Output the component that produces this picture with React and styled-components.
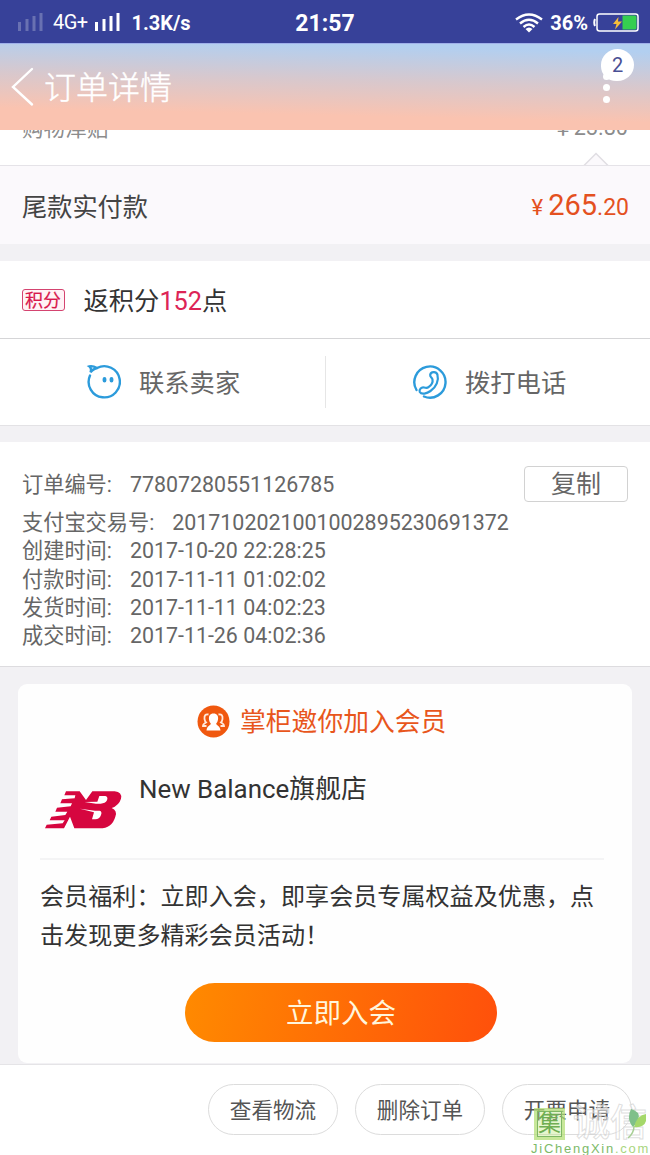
import React from "react"
import styled, { createGlobalStyle } from "styled-components";

const GlobalStyle = createGlobalStyle`
    * {
        box-sizing: border-box;
    }
    body {
        margin: 0;
        background: #f2f1f4;
        font-family: Roboto, "Noto Sans CJK SC", sans-serif;
        color: #333;
    }
`

const Page = styled.div`
    width: 650px;
    height: 1155px;
    overflow: hidden;
    display: flex;
    flex-direction: column;
`

const StatusBar = styled.div`
    flex: none;
    height: 43px;
    padding: 0 11px 0 17px;
    background: #374199;
    color: white;
    display: grid;
    grid-template-columns: 1fr auto 1fr;
    align-items: center;
    font-size: 20px;
    font-weight: bold;
    line-height: 44px;
`

const StatusGroup = styled.div`
    display: flex;
    align-items: center;
    justify-content: ${props => props.$end ? "flex-end" : "flex-start"};
`

const Network = styled.span`
    font-size: 20px;
    font-weight: normal;
    letter-spacing: -0.6px;
    margin: -2px 7px 0 9px;
`

const Speed = styled.span`
    margin: 0 0 0 10px;
    font-size: 20px;
`

const Clock = styled.span`
    font-size: 23px;
    margin-top: 2px;
    margin-left: -6px;
`

const Percent = styled.span`
    margin: 0 5px 0 7px;
    font-size: 20px;
`

const Header = styled.header`
    flex: none;
    height: 87px;
    border-top: 1px solid #9fb0ea;
    background: linear-gradient(181.3deg, #b2cff0 8%, #d8c8cd 43%, #fac3b0 78%);
    display: flex;
    align-items: center;
    padding: 0 16px 0 11px;
    color: white;
`

const Title = styled.h1`
    flex: 1;
    margin: 1px 0 0 9px;
    font-size: 32px;
    font-weight: 300;
    line-height: 40px;
    -webkit-text-stroke: 0.4px white;
`

const MoreMenu = styled.div`
    position: relative;
    width: 33px;
    height: 86px;
`

const Dot = styled.span`
    position: absolute;
    left: 2px;
    top: ${props => props.$top}px;
    width: 7px;
    height: 7px;
    border-radius: 50%;
    background: white;
`

const Badge = styled.span`
    position: absolute;
    left: 0;
    top: 5px;
    width: 33px;
    height: 32px;
    border-radius: 50% 50% 50% 46%;
    background: white;
    color: #4a4f94;
    font-size: 20px;
    line-height: 33px;
    text-align: center;
`

const SubsidyRow = styled.div`
    flex: none;
    height: 36px;
    overflow: hidden;
    background: white;
    border-bottom: 1px solid #e5e3e8;
    display: flex;
    justify-content: space-between;
    padding: 0 22px;
    font-size: 21.6px;
    line-height: 26px;
    color: #8c8c8c;
    position: relative;

    span {
        margin-top: -14px;
    }
    span + span {
        margin-top: -15px;
    }
`

const Notch = styled.svg`
    position: absolute;
    left: 583px;
    top: 22px;
`

const TotalRow = styled.div`
    flex: none;
    height: 78px;
    background: #fbf9fc;
    display: flex;
    align-items: center;
    justify-content: space-between;
    padding: 0 21px 1px 22px;
    font-size: 25.2px;
    color: #444;
`

const Price = styled.span`
    color: #e4511f;
    font-size: ${props => props.$small ? 23 : 29}px;
`

const Yen = styled.span`
    font-size: 22px;
    margin-right: 5px;
`

const Gap = styled.div`
    flex: none;
    height: ${props => props.$height}px;
`

const PointsRow = styled.div`
    flex: none;
    height: 78px;
    background: white;
    border-bottom: 1px solid #d5d5d7;
    display: flex;
    align-items: center;
    padding: 0 21.5px;
    font-size: 25.3px;
    line-height: 36px;

    > span:last-child {
        margin-top: 5px;
    }
    b {
        font-weight: normal;
        color: #dd2456;
    }
`

const Tag = styled.span`
    width: 43px;
    height: 22px;
    margin: 0 19px 0 0;
    border: 1px solid #d44470;
    border-radius: 3px;
    background: #fff3f6;
    color: #d8174c;
    font-size: 18px;
    line-height: 21px;
    text-align: center;
    white-space: nowrap;
    -webkit-text-stroke: 0.2px #d8174c;
`

const ContactRow = styled.div`
    flex: none;
    height: 87px;
    background: white;
    border-bottom: 1px solid #e3e2e5;
    display: flex;
    align-items: center;
`

const Contact = styled.div`
    width: 325px;
    height: 52px;
    display: flex;
    align-items: center;
    padding-left: ${props => props.$divided ? 86 : 86}px;
    font-size: 25.3px;
    line-height: 36px;
    color: #666;
    border-left: ${props => props.$divided ? "1px solid #e6e6e6" : "none"};

    svg {
        margin-right: 18px;
    }
    span {
        margin-top: 3px;
    }
`

const OrderInfo = styled.div`
    flex: none;
    height: 225px;
    background: white;
    border-bottom: 1px solid #dddcdf;
    padding: 24px 22px 0;
    font-size: 21.2px;
    color: #666;
`

const FirstLine = styled.div`
    display: flex;
    justify-content: space-between;
    align-items: center;
    height: 36px;
    margin-bottom: 7px;

    > span {
        margin-top: -4px;
    }
`

const InfoLine = styled.div`
    height: 28.3px;
    line-height: 28.3px;
    white-space: nowrap;
`

const Value = styled.span`
    margin-left: 18px;
    font-size: 21.4px;
`

const CopyButton = styled.button`
    width: 104px;
    height: 36px;
    padding: 0;
    border: 1px solid #d2d2d2;
    border-radius: 4px;
    background: white;
    font-family: inherit;
    font-size: 25px;
    line-height: 36px;
    color: #666;
`

const Card = styled.section`
    flex: none;
    height: 379px;
    margin: 17px 18px 0;
    padding: 18px 28px 0 22px;
    border-radius: 9px;
    background: #fefefe;
    display: flex;
    flex-direction: column;
`

const Invite = styled.div`
    height: 38px;
    display: flex;
    align-items: center;
    padding-left: 157px;
    font-size: 25.8px;
    line-height: 36px;
    color: #e8561c;
    white-space: nowrap;

    svg {
        margin-right: 10px;
    }
    span {
        margin-top: 1px;
    }
`

const Shop = styled.div`
    height: 120px;
    display: flex;
    border-bottom: 2px solid #f4f4f5;
    font-size: 25.9px;
    line-height: 36px;

    svg {
        margin: 50px 16px 0 4px;
    }
    span {
        margin-top: 31px;
    }
`

const Benefit = styled.p`
    margin: 18px -10px 0 0;
    font-size: 24.1px;
    line-height: 39px;
`

const JoinButton = styled.button`
    width: 312px;
    height: 59px;
    margin: 27px 0 0 145px;
    padding: 2px 0 0;
    border: 0;
    border-radius: 30px;
    background: linear-gradient(100deg, #ff8a00, #ff500b);
    color: #fff6dd;
    font-family: inherit;
    font-size: 27.5px;
    line-height: 57px;
`

const BottomBar = styled.footer`
    flex: none;
    height: 92px;
    margin-top: 1px;
    border-top: 1px solid #e5e4e7;
    background: white;
    display: flex;
    justify-content: flex-end;
    gap: 17px;
    padding: 19px 18px 0 0;
    position: relative;
`

const PillButton = styled.button`
    width: 130px;
    height: 51px;
    padding: 2px 0 0;
    border: 1px solid #dcdcdc;
    border-radius: 26px;
    background: white;
    font-family: inherit;
    font-size: 21.6px;
    line-height: 47px;
    color: #555;
`

const Watermark = styled.div`
    position: absolute;
    right: 0;
    bottom: 0;
    width: 120px;
    height: 50px;
`

const SealBox = styled.span`
    position: absolute;
    left: 4px;
    top: 2px;
    width: 31px;
    height: 32px;
    border: 3px solid rgba(174, 218, 112, 0.55);
    background: rgba(190, 232, 130, 0.4);
    box-shadow: inset 0 0 0 1px #7fb765;
    color: #6fae52;
    font-size: 23px;
    line-height: 25px;
    display: flex;
    justify-content: center;
`

const OutlineText = styled.span`
    position: absolute;
    left: 43px;
    top: -2px;
    font-size: 37px;
    font-weight: 500;
    line-height: 40px;
    color: rgba(255, 255, 255, 0.55);
    -webkit-text-stroke: 1px rgba(205, 205, 205, 0.65);
    white-space: nowrap;
`

const Leaf = styled.svg`
    position: absolute;
    left: 98px;
    top: 3px;
`

const SiteName = styled.span`
    position: absolute;
    left: 1px;
    top: 35px;
    font-family: "Liberation Sans", sans-serif;
    font-size: 13px;
    line-height: 16px;
    letter-spacing: 1.75px;
    color: #7dba69;

    i {
        font-style: normal;
        color: #a9d67e;
    }
`

const lines = [
    { label: "支付宝交易号:", value: "2017102021001002895230691372" },
    { label: "创建时间:", value: "2017-10-20 22:28:25" },
    { label: "付款时间:", value: "2017-11-11 01:02:02" },
    { label: "发货时间:", value: "2017-11-11 04:02:23" },
    { label: "成交时间:", value: "2017-11-26 04:02:36" },
]

function Signal({ faded }) {
    return <svg width="27" height="20" viewBox="0 0 27 20" fill="white" opacity={faded ? 0.25 : 1}>
        <rect x="1" y="9" width="3" height="9" />
        <rect x="8.5" y="6" width="3" height="12" />
        <rect x="15.5" y="3" width="3" height="15" />
        <rect x="22.5" y="0" width="3" height="18" />
    </svg>
}

function Wifi() {
    return <svg width="28" height="20" viewBox="0 0 28 20" fill="none" stroke="white" strokeWidth="2.4">
        <path d="M1 6.500Q14-3.500 27 6.500M5 10.500Q14 3 23 10.500M8.500 14Q14 9 19.500 14" />
        <path d="M10.500 16Q14 13 17.500 16L14 19.500Z" fill="white" stroke="none" />
    </svg>
}

function Battery() {
    return <svg width="46" height="20" viewBox="0 0 46 20">
        <path d="M2 6Q.5 9.500 2 13" fill="none" stroke="white" strokeWidth="2" />
        <rect x="4" y="1" width="41" height="17" rx="2.500" fill="none" stroke="white" strokeWidth="1.500" />
        <path d="M29.500 2.500H42Q43.500 2.500 43.500 4V15Q43.500 16.500 42 16.500H29.500Z" fill="#35ce50" />
        <path d="M25.500 4L20 11H23.500L22 16.500L29 8.500H25Z" fill="#f6bd3a" />
    </svg>
}

function BackIcon() {
    return <svg width="24" height="40" viewBox="0 0 24 40" fill="none" stroke="white" strokeWidth="2.4" strokeLinecap="round">
        <path d="M21 2L2 20L21 37.500" />
    </svg>
}

function WangwangIcon() {
    return <svg width="35" height="36" viewBox="0 0 35 36" fill="none" stroke="#2c9bdb" strokeWidth="2.400" strokeLinecap="round">
        <path d="M11 4A15.600 15.600 0 1 1 4 11.500" />
        <path d="M11 4Q6.500 1.500 3.300 2.400Q6 4.500 4.500 8.500Q6 5.500 11 4" strokeWidth="2.400" />
        <path d="M18.500 15V16.500M25.500 15V16.500" strokeWidth="3.800" />
    </svg>
}

function PhoneIcon() {
    return <svg width="35" height="36" viewBox="0 0 35 36" fill="none" stroke="#2c9bdb" strokeWidth="2.400" strokeLinecap="round" strokeLinejoin="round">
        <path d="M4.500 26A15.600 15.600 0 1 1 12 32.500" />
        <path d="M18.200 10.800C18.800 7.800 24 7 25.400 10.500C27 16 24.500 23 18.500 27C15 29.500 9.500 31 7.800 28C6.800 25.500 9.500 22.800 12 23.500C13.600 24 15 24.500 16.500 23.200C19.500 21 21 18 20.500 15.500C20 13.500 17.900 13.200 18.200 10.800Z" strokeWidth="2.200" />
    </svg>
}

function MembersIcon() {
    return <svg width="33" height="33" viewBox="0 0 33 33">
        <circle cx="16.500" cy="16.500" r="16" fill="#f0580f" />
        <path d="M11.500 9.500Q7 8.500 7.500 14Q8 16.500 9 17.500Q6 19 6 21H9.500M21.500 9.500Q26 8.500 25.500 14Q25 16.500 24 17.500Q27 19 27 21H23.500" fill="none" stroke="#ffe9dc" strokeWidth="1.800" />
        <path d="M16.500 8.500C20 8.500 21.500 11 21 14.500C20.700 16.500 20 17.500 19.200 18.500C19.200 20.500 23 20.500 23.500 25.500H9.500C10 20.500 13.800 20.500 13.800 18.500C13 17.500 12.300 16.500 12 14.500C11.500 11 13 8.500 16.500 8.500Z" fill="white" />
    </svg>
}

function ShopLogo() {
    return <svg width="79" height="40" viewBox="0 0 237 120">
        <path fill="#d6063f" d="M66 4H107L126 30L145 4H212Q235 6 231 26Q225 46 203 54Q221 62 214 80Q204 115 167 115H91L78 80L60 115H3L8 104L56 100L62 91H17L22 80L64 75L70 65H34L39 53L80 49L84 40H49L54 28L92 25L94 16H61Z" />
        <g fill="white">
            <path d="M122 36L160 35L166 18H184Q193 20 189 31Q184 41 170 41H156Z" />
            <path d="M108 56L153 62H167Q175 64 171 75Q166 88 154 88H144L150 67Z" />
        </g>
    </svg>
}

function App() {
    return <Page>
        <GlobalStyle />
        <StatusBar>
            <StatusGroup>
                <Signal faded />
                <Network>4G+</Network>
                <Signal />
                <Speed>1.3K/s</Speed>
            </StatusGroup>
            <Clock>21:57</Clock>
            <StatusGroup $end>
                <Wifi />
                <Percent>36%</Percent>
                <Battery />
            </StatusGroup>
        </StatusBar>
        <Header>
            <BackIcon />
            <Title>订单详情</Title>
            <MoreMenu>
                <Dot $top={29} />
                <Dot $top={40} />
                <Dot $top={52} />
                <Badge>2</Badge>
            </MoreMenu>
        </Header>
        <SubsidyRow>
            <span>购物津贴</span>
            <span>￥23.80</span>
            <Notch width="26" height="14" viewBox="0 0 26 14">
                <path d="M1 13.500L13 1.500L25 13.500" fill="#fbf9fc" stroke="#e0dee3" strokeWidth="1.500" />
            </Notch>
        </SubsidyRow>
        <TotalRow>
            <span>尾款实付款</span>
            <Price><Yen>¥</Yen>265<Price $small>.20</Price></Price>
        </TotalRow>
        <Gap $height={17} />
        <PointsRow>
            <Tag>积分</Tag>
            <span>返积分<b>152</b>点</span>
        </PointsRow>
        <ContactRow>
            <Contact><WangwangIcon /><span>联系卖家</span></Contact>
            <Contact $divided><PhoneIcon /><span>拨打电话</span></Contact>
        </ContactRow>
        <Gap $height={16} />
        <OrderInfo>
            <FirstLine>
                <span>订单编号:<Value>77807280551126785</Value></span>
                <CopyButton>复制</CopyButton>
            </FirstLine>
            {lines.map(line => <InfoLine key={line.label}>
                {line.label}<Value>{line.value}</Value>
            </InfoLine>)}
        </OrderInfo>
        <Card>
            <Invite><MembersIcon /><span>掌柜邀你加入会员</span></Invite>
            <Shop>
                <ShopLogo />
                <span>New Balance旗舰店</span>
            </Shop>
            <Benefit>会员福利：立即入会，即享会员专属权益及优惠，点击发现更多精彩会员活动！</Benefit>
            <JoinButton>立即入会</JoinButton>
        </Card>
        <BottomBar>
            <PillButton>查看物流</PillButton>
            <PillButton>删除订单</PillButton>
            <PillButton>开票申请</PillButton>
            <Watermark>
                <SealBox>集</SealBox>
                <OutlineText>诚信</OutlineText>
                <Leaf width="20" height="30" viewBox="0 0 20 30">
                    <path d="M3 0Q-2 10 5 18Q13 10 10 4Q7 1 3 0Z" fill="#7fc08a" />
                    <path d="M18 5Q9 6 6 18Q16 19 18 12Z" fill="#a5d86a" />
                    <path d="M6 17Q6 24 0 29" fill="none" stroke="#a8cf95" strokeWidth="1.500" />
                </Leaf>
                <SiteName>JiChengXin<i>.com</i></SiteName>
            </Watermark>
        </BottomBar>
    </Page>
}

export default App
